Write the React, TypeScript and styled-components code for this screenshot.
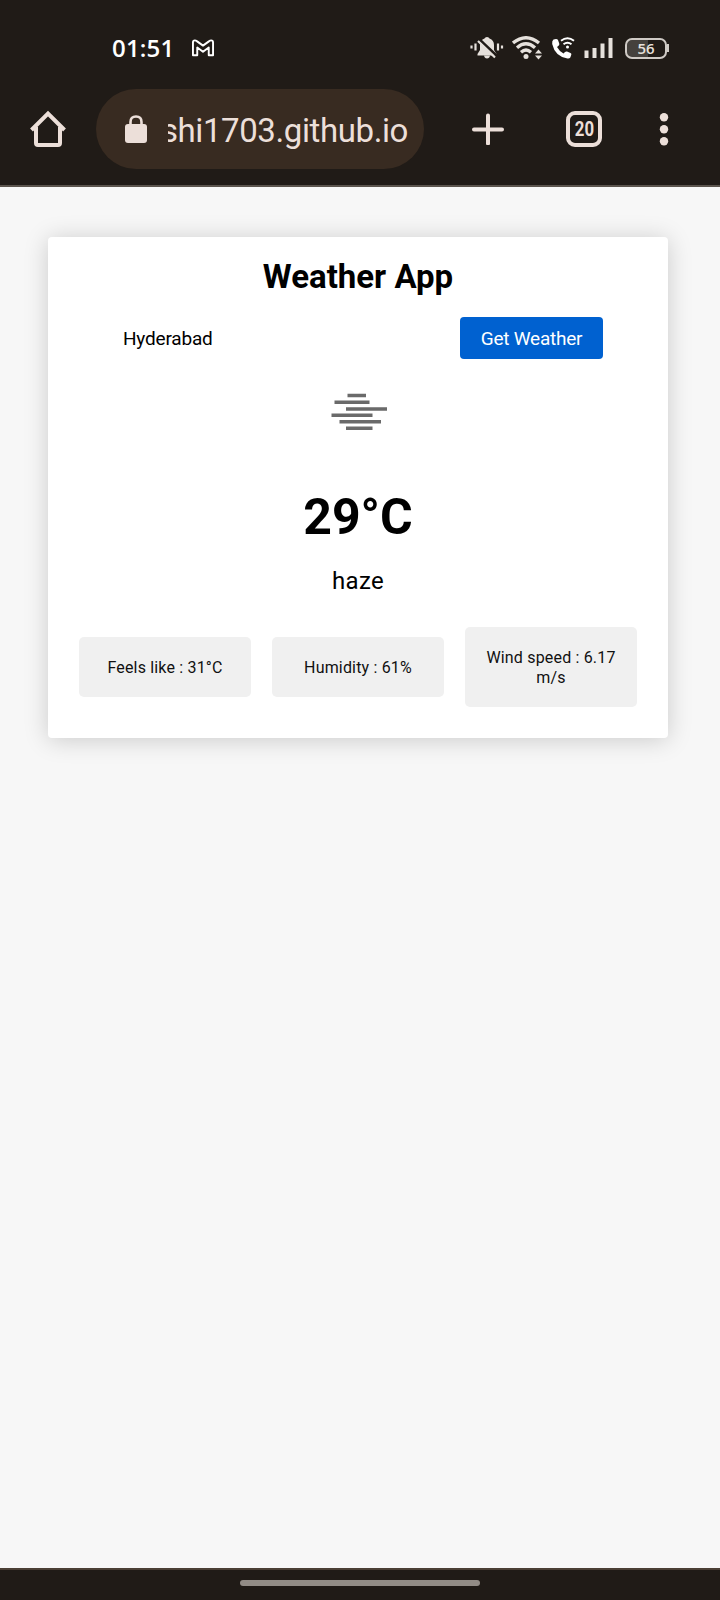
import React from "react";
import styled, { createGlobalStyle } from "styled-components";

const Global = createGlobalStyle`
  * { box-sizing: border-box; }
  html, body { margin: 0; padding: 0; background: #f7f7f7; }
  body { font-family: Roboto, "Liberation Sans", sans-serif; color: #000; }
`;
const Screen = styled.div`
  width: 720px;
  height: 1600px;
  display: flex;
  flex-direction: column;
  background: #f7f7f7;
  overflow: hidden;
`;
const Chrome = styled.header`
  height: 187px;
  flex: none;
  background: #201b17;
  border-bottom: 2px solid #5b544d;
`;
const StatusBar = styled.div`
  height: 89px;
  padding: 7px 51px 0 112px;
  display: flex;
  align-items: center;
  justify-content: space-between;
`;
const StatusGroup = styled.div<{ $gap: number }>`
  display: flex;
  align-items: center;
  gap: ${(p) => p.$gap}px;
`;
const Clock = styled.span`
  font: 600 24px/32px "Open Sans", sans-serif;
  color: #fff;
  width: 63px;
  letter-spacing: 0.2px;
  white-space: nowrap;
`;
const Battery = styled.div`
  width: 42px;
  height: 21px;
  margin-left: 2px;
  border: 2px solid #cfcac5;
  border-radius: 7px;
  background: linear-gradient(90deg, #45413d 56%, #201b17 56%);
  color: #e6e1dc;
  font: 600 15px/17px "Open Sans", sans-serif;
  text-align: center;
`;
const BatteryTip = styled.div`
  width: 2px;
  height: 8px;
  margin-left: -8px;
  background: #cfcac5;
`;
const Toolbar = styled.div`
  height: 80px;
  padding: 0 49px 0 30px;
  display: flex;
  align-items: center;
`;
const AddressBar = styled.div`
  width: 328px;
  height: 80px;
  margin: 0 48px 0 30px;
  padding: 0 16px 0 29px;
  display: flex;
  align-items: center;
  gap: 21px;
  border-radius: 40px;
  background: #382b21;
`;
const Address = styled.div`
  width: 240px;
  display: flex;
  justify-content: flex-end;
  overflow: hidden;
  white-space: nowrap;
  color: #ecdfd9;
  font-size: 33px;
  letter-spacing: -0.4px;
  line-height: 44px;
  margin-top: 4px;
`;
const TabCount = styled.div`
  width: 36px;
  height: 36px;
  margin: 0 57px 0 62px;
  display: grid;
  place-items: center;
  border: 4px solid #ecdfd9;
  border-radius: 9px;
  color: #ecdfd9;
  font-weight: 700;
  font-size: 20px;
  line-height: 20px;
`;
const Narrow = styled.span`
  transform: scaleX(0.84);
`;
const Page = styled.main`
  flex: 1;
  padding: 50px 52px 0 48px;
`;
const Card = styled.section`
  height: 501px;
  display: flex;
  flex-direction: column;
  align-items: center;
  background: #fff;
  border-radius: 4px;
  box-shadow: 0 2px 24px rgba(0, 0, 0, 0.18);
`;
const Title = styled.h1`
  margin: 20px 0 0;
  font-size: 33px;
  line-height: 40px;
  font-weight: 700;
`;
const Search = styled.div`
  width: 100%;
  margin-top: 20px;
  padding: 0 65px 0 75px;
  display: flex;
  align-items: center;
  justify-content: space-between;
`;
const City = styled.span`
  font-size: 19px;
  letter-spacing: -0.2px;
`;
const Button = styled.button`
  width: 143px;
  height: 42px;
  padding: 0;
  border: 0;
  border-radius: 4px;
  background: #0061d0;
  color: #fff;
  font-family: inherit;
  font-size: 19px;
  letter-spacing: -0.25px;
`;
const HazeIcon = styled.svg`
  margin-top: 31px;
`;
const Temperature = styled.h2`
  margin: 53px 0 0;
  font-size: 50px;
  line-height: 60px;
  font-weight: 700;
`;
const Condition = styled.p`
  margin: 19px 0 0;
  font-size: 24px;
  line-height: 30px;
  letter-spacing: 0.3px;
`;
const Details = styled.div`
  margin-top: 31px;
  display: flex;
  align-items: center;
  gap: 21px;
`;
const Detail = styled.div`
  width: 172px;
  padding: 21px 20px 19px;
  border-radius: 5px;
  background: #f0f0f0;
  color: #111;
  text-align: center;
  font-size: 16px;
  letter-spacing: 0.18px;
  line-height: 20px;
`;
const NavBar = styled.footer`
  height: 32px;
  flex: none;
  display: flex;
  justify-content: center;
  padding-top: 10px;
  background: #201b17;
  border-top: 2px solid #4b3f35;
`;
const Handle = styled.div`
  width: 240px;
  height: 6px;
  border-radius: 3px;
  background: #928c86;
`;

const details = ["Feels like : 31°C", "Humidity : 61%", "Wind speed : 6.17 m/s"];

export default function App() {
  return (
    <Screen>
      <Global />
      <Chrome>
        <StatusBar>
          <StatusGroup $gap={17}>
            <Clock>01:51</Clock>
            <svg width="22" height="18" viewBox="0 0 23 18" fill="none" stroke="#fff" strokeWidth="2" strokeLinejoin="round">
              <path d="M1 3.200Q1 1 3 1Q4 1 5 1.800L11.500 6.500L18 1.800Q19 1 20 1Q22 1 22 3.200V16.500H17.500V8.500L11.500 13L5.500 8.500V16.500H1Z" />
            </svg>
          </StatusGroup>
          <StatusGroup $gap={8}>
            <svg width="34" height="24" viewBox="0 0 34 24">
              <g fill="#e6e1dc">
                <path d="M14.500 2.500Q15 1 17 1Q19 1 19.500 2.500Q24 4 24 9V14L26.500 18V19.500H7.500V18L10 14V9Q10 4 14.500 2.500Z" />
                <path d="M14 19.500H20Q19.500 22.500 17 22.500Q14.500 22.500 14 19.500Z" />
              </g>
              <path d="M9 3L27 20" stroke="#201b17" strokeWidth="2.500" />
              <path d="M8 5L25 21.500M1.500 9.500V12.500M5.500 7.500V14.500M28 7.500V14.500M32 9.500V12.500" stroke="#e6e1dc" strokeWidth="2.200" fill="none" />
            </svg>
            <svg width="31" height="24" viewBox="0 0 31 24">
              <path d="M1 7Q14 -3.500 27 7M5 11.700Q14 4 23 11.700M9 16.200Q14 12 19 16.200" fill="none" stroke="#e6e1dc" strokeWidth="3.400" />
              <circle cx="14" cy="20.500" r="2.500" fill="#e6e1dc" />
              <path d="M23 17.500L26.500 13.500L30 17.500ZM23 19.500L26.500 23.500L30 19.500Z" fill="#e6e1dc" />
            </svg>
            <svg width="24" height="24" viewBox="0 0 24 24">
              <path d="M2.500 3.500L5 3Q6.500 3 7 4L8.300 7.700Q8.500 9 7.500 9.700L6 11Q8.500 15.500 12.500 17.500L14 16Q15 15.200 16 15.500L19.500 17Q20.700 17.500 20.300 18.700L19.300 21.500Q18.500 22.800 16.500 22.500Q4 20.500 1.200 8Q.8 4.500 2.500 3.500Z" fill="#fff" />
              <path d="M10 4.800Q16.500 -.5 23 4.800M12.500 8.300Q16.500 5 20.500 8.300" fill="none" stroke="#fff" strokeWidth="1.900" />
              <circle cx="16.500" cy="11" r="1.500" fill="#fff" />
            </svg>
            <svg width="32" height="22" viewBox="0 0 32 22">
              <path d="M3.500 21V13.500M11.500 21V11M19.500 21V6.500M27.500 21V1" stroke="#e6e1dc" strokeWidth="4" />
            </svg>
            <Battery>56</Battery>
            <BatteryTip />
          </StatusGroup>
        </StatusBar>
        <Toolbar>
          <svg width="36" height="38" viewBox="0 0 36 38" fill="none" stroke="#ecdfd9" strokeWidth="4">
            <path d="M1.500 20L18 3.500L34.500 20M6 17V33Q6 35 8 35H28Q30 35 30 33V17" />
          </svg>
          <AddressBar>
            <svg width="22" height="28" viewBox="0 0 22 28">
              <rect y="9" width="22" height="19" rx="3" fill="#ecdfd9" />
              <path d="M5.500 11V7Q5.500 1.500 11 1.500Q16.500 1.500 16.500 7V11" fill="none" stroke="#ecdfd9" strokeWidth="2.600" />
            </svg>
            <Address>shi1703.github.io</Address>
          </AddressBar>
          <svg width="32" height="32" viewBox="0 0 32 32">
            <path d="M2 16.400H30M16 2.400V30.400" stroke="#ecdfd9" strokeWidth="4" strokeLinecap="round" />
          </svg>
          <TabCount><Narrow>20</Narrow></TabCount>
          <svg width="10" height="34" viewBox="0 0 10 34" fill="#ecdfd9">
            <circle cx="5" cy="5.300" r="4.200" />
            <circle cx="5" cy="17.300" r="4.200" />
            <circle cx="5" cy="29.300" r="4.200" />
          </svg>
        </Toolbar>
      </Chrome>
      <Page>
        <Card>
          <Title>Weather App</Title>
          <Search>
            <City>Hyderabad</City>
            <Button>Get Weather</Button>
          </Search>
          <HazeIcon width="60" height="44" viewBox="0 0 60 44">
            <path d="M19.500 5.500H38M6.500 12.300H41.500M18 19H59M3.500 25.300H44.500M11.500 31.700H53M18 38.200H44.500" stroke="#6a6a6a" strokeWidth="3.400" />
          </HazeIcon>
          <Temperature>29°C</Temperature>
          <Condition>haze</Condition>
          <Details>
            {details.map((d) => <Detail key={d}>{d}</Detail>)}
          </Details>
        </Card>
      </Page>
      <NavBar><Handle /></NavBar>
    </Screen>
  );
}
